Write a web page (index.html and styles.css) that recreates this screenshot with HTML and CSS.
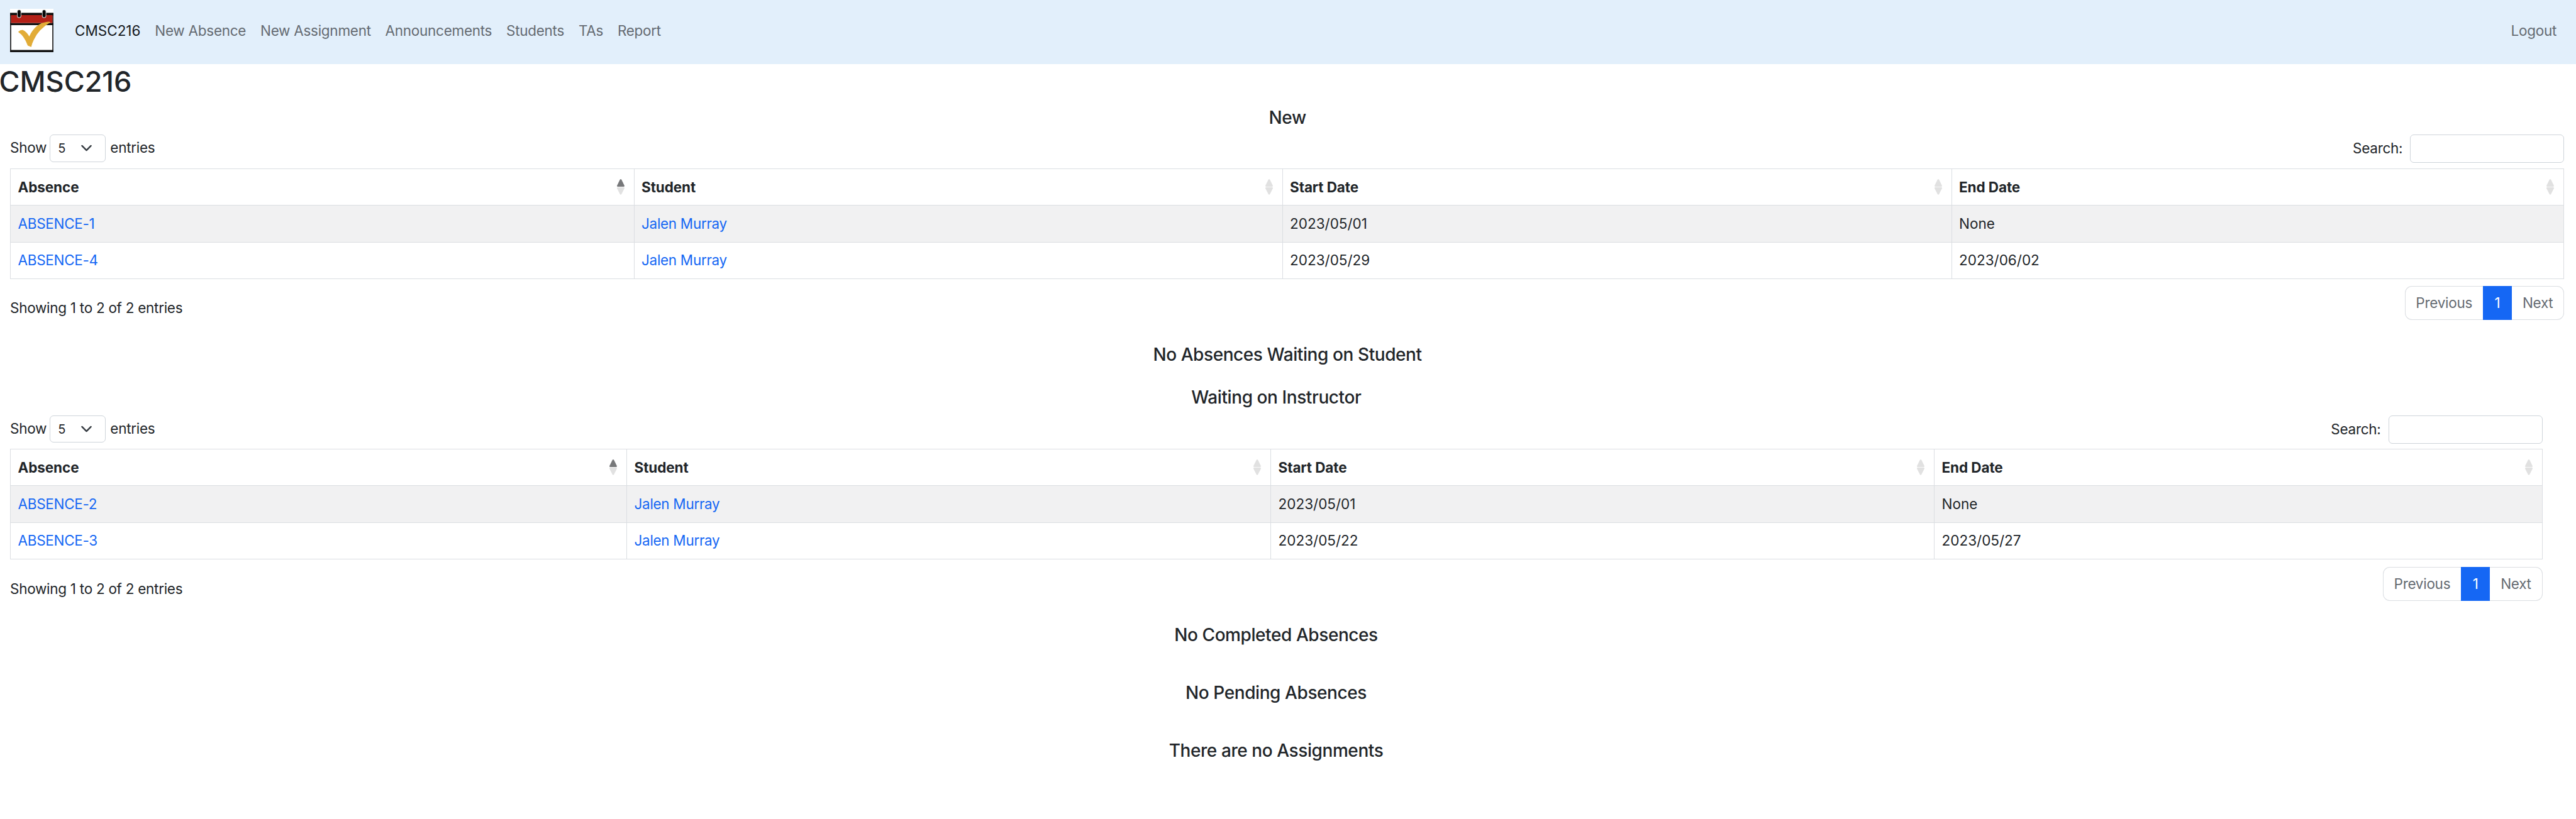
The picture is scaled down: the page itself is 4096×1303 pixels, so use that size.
FILE: index.html
```html
<!DOCTYPE html>
<html lang="en">
<head>
<meta charset="utf-8">
<title>CMSC216</title>
<link rel="stylesheet" href="styles.css">
</head>
<body>
<nav class="navbar">
  <svg class="logo" viewBox="0 0 86 87" preserveAspectRatio="none" aria-hidden="true">
    <rect width="86" height="87" fill="#fff"/>
    <rect x="1.2" y="9.5" width="83.6" height="75.5" fill="#fff" stroke="#222" stroke-width="2.2"/>
    <path d="M0 8h86v5H0zM0 28h86v4.500H0zM0 82h86v4H0z" fill="#111"/>
    <path d="M2 12.500h82v15.500H2z" fill="#b32017"/>
    <path d="M18 6v8M67.500 6v8" stroke="#ccc" stroke-width="8.500" stroke-linecap="round"/>
    <path d="M18 5.500v8.500M67.500 5.500v8.500" stroke="#080808" stroke-width="6" stroke-linecap="round"/>
    <path d="M16 46Q20 42 25 42Q33 46 38 55Q50 29 73 26Q79 25 80 27Q56 41 47 62Q43 70 42 76L35 73Q28 54 16 46Z" fill="#e2ac37"/>
  </svg>
  <div class="nav-links">
    <a class="active">CMSC216</a><a>New Absence</a><a>New Assignment</a><a>Announcements</a><a>Students</a><a>TAs</a><a>Report</a>
  </div>
  <a class="logout">Logout</a>
</nav>
<h1>CMSC216</h1>
<section class="block first">
  <h2>New</h2>
  <div class="controls">
    <div class="length"><span class="show">Show</span><span class="select"><span>5</span><svg viewBox="0 0 16 16" aria-hidden="true"><path d="m2 5 6 6 6-6"/></svg></span><span>entries</span></div>
    <label class="search"><span>Search:</span><input type="text"></label>
  </div>
  <table>
    <colgroup><col class="c1"><col class="c2"><col class="c3"><col></colgroup>
    <thead><tr>
      <th><div>Absence<svg class="sort asc" viewBox="0 0 15 31"><path d="M6 1Q7.500-1 9 1L15 13Q15 15 13.500 15h-12Q0 15 0 13z"/><path d="M6 30Q7.500 32 9 30L15 18Q15 16 13.500 16h-12Q0 16 0 18z"/></svg></div></th>
      <th><div>Student<svg class="sort" viewBox="0 0 15 31"><path d="M6 1Q7.500-1 9 1L15 13Q15 15 13.500 15h-12Q0 15 0 13z"/><path d="M6 30Q7.500 32 9 30L15 18Q15 16 13.500 16h-12Q0 16 0 18z"/></svg></div></th>
      <th><div>Start Date<svg class="sort" viewBox="0 0 15 31"><path d="M6 1Q7.500-1 9 1L15 13Q15 15 13.500 15h-12Q0 15 0 13z"/><path d="M6 30Q7.500 32 9 30L15 18Q15 16 13.500 16h-12Q0 16 0 18z"/></svg></div></th>
      <th><div>End Date<svg class="sort" viewBox="0 0 15 31"><path d="M6 1Q7.500-1 9 1L15 13Q15 15 13.500 15h-12Q0 15 0 13z"/><path d="M6 30Q7.500 32 9 30L15 18Q15 16 13.500 16h-12Q0 16 0 18z"/></svg></div></th>
    </tr></thead>
    <tbody>
      <tr><td><a>ABSENCE-1</a></td><td><a>Jalen Murray</a></td><td>2023/05/01</td><td>None</td></tr>
      <tr><td><a>ABSENCE-4</a></td><td><a>Jalen Murray</a></td><td>2023/05/29</td><td>2023/06/02</td></tr>
    </tbody>
  </table>
  <div class="footer">
    <span class="info">Showing 1 to 2 of 2 entries</span>
    <div class="pager"><span class="prev">Previous</span><span class="page">1</span><span class="next">Next</span></div>
  </div>
</section>
<h2 class="student-note">No Absences Waiting on Student</h2>
<section class="block second">
  <h2>Waiting on Instructor</h2>
  <div class="controls">
    <div class="length"><span class="show">Show</span><span class="select"><span>5</span><svg viewBox="0 0 16 16" aria-hidden="true"><path d="m2 5 6 6 6-6"/></svg></span><span>entries</span></div>
    <label class="search"><span>Search:</span><input type="text"></label>
  </div>
  <table>
    <colgroup><col class="c1"><col class="c2"><col class="c3"><col></colgroup>
    <thead><tr>
      <th><div>Absence<svg class="sort asc" viewBox="0 0 15 31"><path d="M6 1Q7.500-1 9 1L15 13Q15 15 13.500 15h-12Q0 15 0 13z"/><path d="M6 30Q7.500 32 9 30L15 18Q15 16 13.500 16h-12Q0 16 0 18z"/></svg></div></th>
      <th><div>Student<svg class="sort" viewBox="0 0 15 31"><path d="M6 1Q7.500-1 9 1L15 13Q15 15 13.500 15h-12Q0 15 0 13z"/><path d="M6 30Q7.500 32 9 30L15 18Q15 16 13.500 16h-12Q0 16 0 18z"/></svg></div></th>
      <th><div>Start Date<svg class="sort" viewBox="0 0 15 31"><path d="M6 1Q7.500-1 9 1L15 13Q15 15 13.500 15h-12Q0 15 0 13z"/><path d="M6 30Q7.500 32 9 30L15 18Q15 16 13.500 16h-12Q0 16 0 18z"/></svg></div></th>
      <th><div>End Date<svg class="sort" viewBox="0 0 15 31"><path d="M6 1Q7.500-1 9 1L15 13Q15 15 13.500 15h-12Q0 15 0 13z"/><path d="M6 30Q7.500 32 9 30L15 18Q15 16 13.500 16h-12Q0 16 0 18z"/></svg></div></th>
    </tr></thead>
    <tbody>
      <tr><td><a>ABSENCE-2</a></td><td><a>Jalen Murray</a></td><td>2023/05/01</td><td>None</td></tr>
      <tr><td><a>ABSENCE-3</a></td><td><a>Jalen Murray</a></td><td>2023/05/22</td><td>2023/05/27</td></tr>
    </tbody>
  </table>
  <div class="footer">
    <span class="info">Showing 1 to 2 of 2 entries</span>
    <div class="pager"><span class="prev">Previous</span><span class="page">1</span><span class="next">Next</span></div>
  </div>
</section>
<div class="notes">
  <h2>No Completed Absences</h2>
  <h2>No Pending Absences</h2>
  <h2>There are no Assignments</h2>
</div>
</body>
</html>
```
FILE: styles.css
```css
* { box-sizing: border-box; }
body {
  margin: 0;
  background: #fff;
  color: #212529;
  font: 22.5px/34px Inter, "Liberation Sans", sans-serif;
  letter-spacing: -0.28px;
  overflow: hidden;
}
.navbar {
  height: 101.6px;
  background: #e2effb;
  display: flex;
  align-items: center;
  padding: 0 31px 4.600px 16px;
}
.logo { width: 69px; height: 69.600px; flex: none; }
.nav-links { display: flex; gap: 22.800px; margin-left: 34px; flex: 1; }
.navbar a { color: #656b72; }
.navbar .active { color: #15181b; letter-spacing: 0; }
h1 { margin: 4.500px 0 0 -1.500px; font-size: 45px; line-height: 48px; font-weight: 500; height: 63.500px; letter-spacing: 0; }
h2 { margin: 0; font-size: 28px; line-height: 34px; font-weight: 500; text-align: center; letter-spacing: -0.42px; }
.block { padding-left: 16px; }
.first { width: 4077.300px; }
.second { width: 4042.500px; }
.first h2 { margin-right: -1px; padding-bottom: 10.800px; height: 44.800px; }
.second h2 { height: 45.600px; }
.controls { display: flex; justify-content: space-between; height: 53.600px; }
.second .controls { height: 53px; }
.length { display: flex; gap: 7px; align-items: flex-start; line-height: 42px; }
.show { width: 56.300px; white-space: nowrap; }
.select {
  width: 89px; height: 43.200px;
  border: 1.500px solid #ced4da; border-radius: 6px;
  display: flex; justify-content: space-between; align-items: center;
  padding: 0 20px 0 12px; font-size: 20px;
}
.select svg { width: 19px; height: 19px; fill: none; stroke: #343a40; stroke-width: 2; stroke-linecap: round; stroke-linejoin: round; }
.search { display: flex; gap: 12px; line-height: 43px; }
.search input { width: 245px; height: 44.800px; border: 1.500px solid #ced4da; border-radius: 6px; background: #fff; }
table { width: 100%; border-collapse: collapse; table-layout: fixed; letter-spacing: 0; }
td, th { border: 1px solid #dbdee2; height: 58.400px; padding: 0 11.500px; text-align: left; }
th { font-weight: 700; letter-spacing: -0.1px; }
th div { display: flex; align-items: center; justify-content: space-between; }
td a { color: #1567f4; letter-spacing: -0.3px; }
tbody tr:first-child { background: #f1f1f2; }
.sort { width: 12px; height: 24.800px; fill: #e1e1e1; margin-right: 3.500px; }
.asc path:first-child { fill: #77787a; }
.footer { display: flex; justify-content: space-between; padding-top: 11px; }
.second .footer { padding-top: 12px; }
.info { padding-top: 17.500px; }
.pager { display: flex; width: 253.600px; height: 53.600px; line-height: 52px; color: #656b72; text-align: center; }
.prev { width: 124px; border: 1px solid #dbdee2; border-right: 0; border-radius: 11px 0 0 11px; }
.page { width: 46.400px; background: #1567f4; color: #fff; padding-top: 1px; }
.next { flex: 1; border: 1px solid #dbdee2; border-left: 0; border-radius: 0 11px 11px 0; }
.first .c1 { width: 991.500px; }
.first .c2 { width: 1031px; }
.first .c3 { width: 1064px; }
.second .c1 { width: 980px; }
.second .c2 { width: 1024px; }
.second .c3 { width: 1055px; }
.student-note { margin-top: 38px; width: 4094px; }
.second { margin-top: 34.600px; }
.notes { display: grid; gap: 58px; margin-top: 37.500px; width: 4058px; }
```
